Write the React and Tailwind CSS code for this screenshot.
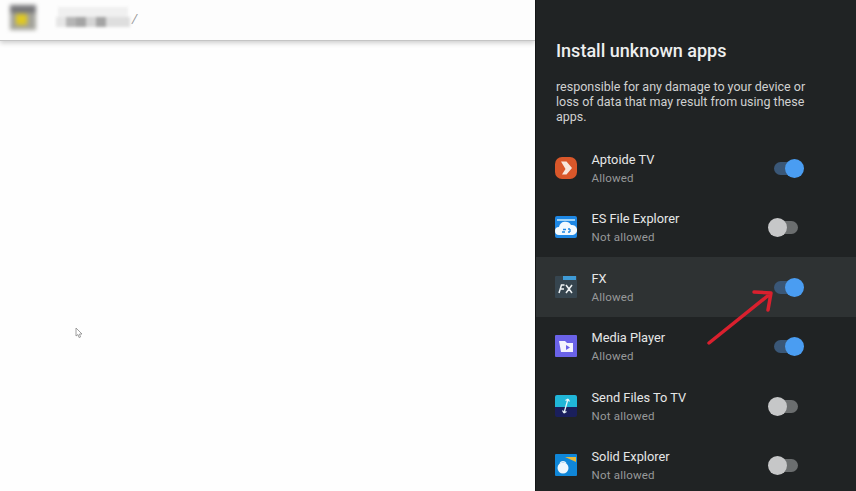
const apps = [
  { name: 'Aptoide TV', on: true, icon: 'aptoide' },
  { name: 'ES File Explorer', on: false, icon: 'es' },
  { name: 'FX', on: true, icon: 'fx', active: true },
  { name: 'Media Player', on: true, icon: 'media' },
  { name: 'Send Files To TV', on: false, icon: 'send' },
  { name: 'Solid Explorer', on: false, icon: 'solid' },
];

function AppIcon({ type }) {
  if (type === 'aptoide') {
    return (
      <svg width="22" height="22" viewBox="0 0 22 22">
        <rect x="0" y="0" width="22" height="22" rx="7" fill="#d9572a" />
        <path d="M6 4.500h5.500l5.500 6.500-5.500 6.500H7l3.500-5.500-4.500-7.500z" fill="#f7e6dc" />
      </svg>
    );
  }
  if (type === 'es') {
    return (
      <svg width="22" height="22" viewBox="0 0 22 22">
        <rect width="22" height="22" rx="2" fill="#1d87e4" />
        <rect x="2" y="3" width="18" height="2" fill="#9fd3f7" />
        <path d="M4 19a4 4 0 0 1 0-8 6.500 6.500 0 0 1 12-2 5 5 0 0 1 2 10z" fill="#f2f9fe" />
        <path d="M7 16h3M8 13.500h3M13 13h2M13 16h2M15 13v3" stroke="#1d87e4" strokeWidth="1.3" fill="none" />
      </svg>
    );
  }
  if (type === 'fx') {
    return (
      <svg width="22" height="22" viewBox="0 0 22 22">
        <rect width="22" height="22" rx="1" fill="#36454f" />
        <rect x="8" y="0" width="13" height="4" fill="#3f9bd6" />
        <path d="M4 17l2.500-8h3M5 13h4M11 9l6 8M17 9l-6 8" stroke="#eef2f4" strokeWidth="1.5" fill="none" />
      </svg>
    );
  }
  if (type === 'media') {
    return (
      <svg width="22" height="22" viewBox="0 0 22 22">
        <rect width="22" height="22" rx="1" fill="#6a62e8" />
        <path d="M4 6h6l2 2h6v9H6z" fill="#f4f3fe" />
        <path d="M11 10l4 2.500-4 2.500z" fill="#6a62e8" />
      </svg>
    );
  }
  if (type === 'send') {
    return (
      <svg width="22" height="22" viewBox="0 0 22 22">
        <rect width="22" height="22" rx="2" fill="#1a1f5c" />
        <path d="M0 2a2 2 0 0 1 2-2h18a2 2 0 0 1 2 2v10H0z" fill="#20b6d8" />
        <path d="M13 4l-4 14M13 4l-2.500 1.500M13 4l1.500 2.500M9 18l2.500-1.500M9 18l-1.500-2.500" stroke="#e8f4f8" strokeWidth="1.3" fill="none" />
      </svg>
    );
  }
  return (
    <svg width="22" height="22" viewBox="0 0 22 22">
      <rect width="22" height="22" rx="1" fill="#0f86d8" />
      <path d="M10 3h11v5z" fill="#e9b93a" />
      <circle cx="8" cy="14" r="5.500" fill="#eef7fd" />
      <path d="M5 9.500a3.500 3.500 0 0 1 6 0" stroke="#eef7fd" strokeWidth="1.400" fill="none" />
    </svg>
  );
}

function Toggle({ on }) {
  if (on) {
    return (
      <div className="relative h-[19px] w-[30px]">
        <div className="absolute left-0 top-[3px] h-[13px] w-[24px] rounded-full bg-[#3a5777]" />
        <div className="absolute right-0 top-0 h-[19px] w-[19px] rounded-full bg-[#4a9df2]" />
      </div>
    );
  }
  return (
    <div className="relative h-[19px] w-[30px] -translate-x-[6px]">
      <div className="absolute right-0 top-[3px] h-[13px] w-[24px] rounded-full bg-[#6b6e6f]" />
      <div className="absolute left-0 top-0 h-[19px] w-[19px] rounded-full bg-[#c6c7c8]" />
    </div>
  );
}

function AppRow({ app }) {
  return (
    <div className={`flex h-[59.500px] items-center pl-[19px] pr-[52.500px] ${app.active ? 'bg-[#2e3233]' : ''}`}>
      <AppIcon type={app.icon} />
      <div className="ml-[14.500px] flex-1 pt-[1px]">
        <div className="text-[12.800px] leading-[19px] text-[#e6e7e7]">{app.name}</div>
        <div className="text-[11.500px] leading-[18px] tracking-[0.2px] text-[#97999a]">{app.on ? 'Allowed' : 'Not allowed'}</div>
      </div>
      <div className="pt-[1px]">
        <Toggle on={app.on} />
      </div>
    </div>
  );
}

export default function App() {
  return (
    <div className="relative flex h-[491px] w-[856px] overflow-hidden bg-white font-['Roboto',sans-serif]">
      <div className="flex-1 bg-[#fefefe]">
        <div className="flex h-[41px] items-center border-b border-[#c4c4c4] bg-[#fdfdfd] pb-[6px] pl-[10px] shadow-[0_2px_5px_rgba(0,0,0,0.2)]">
          <div className="relative h-[25px] w-[26px] bg-[#a3a39b] blur-[2px]">
            <div className="absolute left-0 top-0 h-[8px] w-full bg-[#77777a]" />
            <div className="absolute left-[6px] top-[9px] h-[11px] w-[11px] bg-[#dfc823]" />
          </div>
          <div className="ml-[20px] flex h-[20px] flex-col blur-[1.500px]">
            <div className="ml-[2px] h-[10px] w-[70px] bg-[#f0f0f0]" />
            <div className="flex">
              <div className="h-[10px] w-[10px] bg-[#e6e6e6]" />
              <div className="h-[10px] w-[10px] bg-[#b5b5b5]" />
              <div className="h-[10px] w-[10px] bg-[#a4a4a4]" />
              <div className="h-[10px] w-[10px] bg-[#d4d4d4]" />
              <div className="h-[10px] w-[10px] bg-[#a4a4a4]" />
              <div className="h-[10px] w-[24px] bg-[#dedede]" />
            </div>
          </div>
          <span className="ml-[2px] mt-[4px] text-[13px] text-[#9a9a9a] italic">/</span>
        </div>
      </div>

      <div className="w-[321px] border-l border-[#141617] bg-[#202324]">
        <h1 className="pl-[20px] pt-[40px] text-[18px] font-medium leading-[22px] text-[#eeefef]">Install unknown apps</h1>
        <p className="pl-[20px] pr-[40px] pt-[17px] text-[12.500px] leading-[15px] text-[#d0d1d1]">
          responsible for any damage to your device or loss of data that may result from using these apps.
        </p>
        <div className="pt-[14px]">
          {apps.map((app) => (
            <AppRow key={app.name} app={app} />
          ))}
        </div>
      </div>

      {/* red annotation arrow */}
      <svg className="absolute left-[700px] top-[285px]" width="80" height="65" viewBox="0 0 80 65" fill="none">
        <path d="M9 58L70 9M54 7L71 8L68 25" stroke="#d9202e" strokeWidth="3.500" strokeLinecap="round" strokeLinejoin="round" />
      </svg>

      {/* mouse cursor */}
      <svg className="absolute left-[75px] top-[327px]" width="9" height="12" viewBox="0 0 9 12">
        <path d="M1 1v8l2-1.500 1 3 1.500-.5-1-3h2.500z" fill="#fff" stroke="#888" strokeWidth="0.800" />
      </svg>
    </div>
  );
}
